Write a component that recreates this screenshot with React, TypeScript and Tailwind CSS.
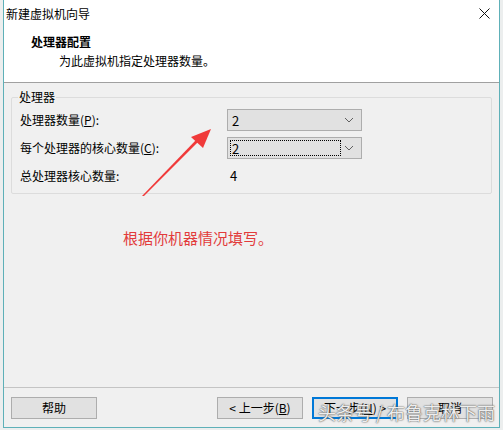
import React from "react";

const ui = "font-['Microsoft_YaHei_UI','Noto_Sans_CJK_SC',sans-serif]";

const Chevron = () => (
  <svg width="10" height="6" viewBox="0 0 10 6" className="shrink-0">
    <polyline points="1,1 5,5 9,1" fill="none" stroke="#606060" strokeWidth="1" />
  </svg>
);

const Combo = ({ value, focused }: { value: string; focused?: boolean }) => (
  <div className="w-[135px] h-[22px] flex items-center bg-[#e1e1e1] border border-[#adadad] pl-[2px] pr-[4px]">
    <div
      className={
        focused
          ? "flex-1 h-[16px] flex items-center border border-dotted border-black pl-[1px] leading-none"
          : "flex-1 h-[16px] flex items-center pl-[2px] leading-none"
      }
    >
      <span className="text-[13px] text-black">{value}</span>
    </div>
    <div className="w-[16px] flex justify-center">
      <Chevron />
    </div>
  </div>
);

const Button = ({ children, primary }: { children: React.ReactNode; primary?: boolean }) => (
  <button
    className={
      primary
        ? "w-[86px] h-[22px] bg-[#e1e1e1] border-2 border-[#0078d7] text-[12px] leading-none text-black"
        : "w-[86px] h-[22px] bg-[#e1e1e1] border border-[#adadad] text-[12px] leading-none text-black"
    }
  >
    {children}
  </button>
);

export default function App() {
  return (
    <div className={`relative w-[503px] h-[430px] bg-[#eceeee] pl-[3px] overflow-hidden ${ui}`}>
      <div className="w-[497px] h-[428px] flex flex-col border-x border-b border-[#5eb0b8] bg-white">
        {/* title bar */}
        <div className="h-[27px] flex items-center justify-between pl-[2px] pr-[9px]">
          <span className="text-[12px] leading-none text-black">新建虚拟机向导</span>
          <svg width="11" height="11" viewBox="0 0 11 11">
            <path d="M0.5 0.5 L10.5 10.5 M10.5 0.5 L0.5 10.5" stroke="#111" strokeWidth="1" />
          </svg>
        </div>

        {/* header */}
        <div className="h-[56px] border-b border-[#a0a0a0] pl-[27px] pt-[7px]">
          <div className="text-[12px] leading-[16px] font-bold text-black">处理器配置</div>
          <div className="mt-[3px] pl-[28px] text-[12px] leading-[16px] text-black">为此虚拟机指定处理器数量。</div>
        </div>

        {/* body */}
        <div className="flex-1 bg-[#f0f0f0] pt-[6px]">
          <fieldset className="ml-[7px] w-[481px] border border-[#dcdcdc] rounded-[2px] pl-[8px] pt-[4px] pb-[6px]">
            <legend className="-ml-[2px] px-[1px] text-[12px] leading-[16px] text-black">处理器</legend>
            <div className="flex flex-col gap-[6px] text-[12px] text-black">
              <div className="h-[22px] flex items-center">
                <span className="w-[207px]">
                  处理器数量(<u>P</u>):
                </span>
                <Combo value="2" />
              </div>
              <div className="h-[22px] flex items-center">
                <span className="w-[207px]">
                  每个处理器的核心数量(<u>C</u>):
                </span>
                <Combo value="2" focused />
              </div>
              <div className="h-[22px] flex items-center">
                <span className="w-[210px]">总处理器核心数量:</span>
                <span className="text-[13px]">4</span>
              </div>
            </div>
          </fieldset>

          <div className="mt-[34px] ml-[119px] text-[15px] leading-[20px] text-[#e23b3b]">根据你机器情况填写。</div>
        </div>

        {/* footer */}
        <div className="h-[40px] border-t border-[#c4c4c4] bg-[#f0f0f0] pt-[9px] pl-[7px] pr-[6px] flex justify-between items-start">
          <Button>帮助</Button>
          <div className="flex gap-[9px]">
            <Button>
              &lt; 上一步(<u>B</u>)
            </Button>
            <Button primary>
              下一步(<u>N</u>) &gt;
            </Button>
            <Button>取消</Button>
          </div>
        </div>
      </div>

      {/* red annotation arrow */}
      <svg className="absolute left-0 top-0 pointer-events-none" width="503" height="430" viewBox="0 0 503 430">
        <polygon points="142,196 144,196 198,142 196,140" fill="#f03a3a" />
        <polygon points="211,129 191,137 203,148" fill="#f03a3a" />
      </svg>

      {/* watermark */}
      <div className="absolute left-[318px] top-[401px] text-[18px] leading-[22px] text-white/90 tracking-[0px] [text-shadow:0_0_1px_#444,0_0_2px_#666] pointer-events-none">
        头条号 / 布鲁克林下雨
      </div>
    </div>
  );
}
